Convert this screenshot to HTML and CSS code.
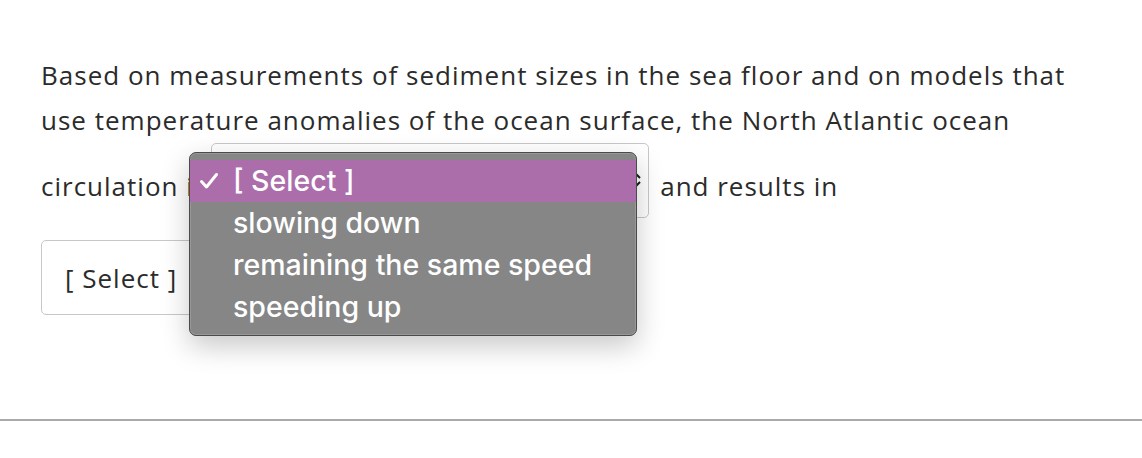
FILE: index.html
```html
<!DOCTYPE html>
<html lang="en">
<head>
<meta charset="utf-8">
<title>Question</title>
<link rel="stylesheet" href="styles.css">
</head>
<body>
<div class="page">
  <div class="question">
    <div class="line">Based on measurements of sediment sizes in the sea floor and on models that</div>
    <div class="line">use temperature anomalies of the ocean surface, the North Atlantic ocean</div>
    <div class="row">
      <span class="label">circulation is</span>
      <div class="select select-first">
        <span class="select-text">[ Select ]</span>
        <svg class="select-arrow" width="10" height="18" viewBox="0 0 10 18"><path d="M2 7 L5 4 L8 7 M2 11 L5 14 L8 11" fill="none" stroke="#1a1a1a" stroke-width="2"/></svg>
      </div>
      <span class="label label-after">and results in</span>
    </div>
    <div class="row row-second">
      <div class="select select-second">
        <span class="select-text">[ Select ]</span>
      </div>
    </div>
  </div>
  <div class="rule"></div>

  <div class="menu">
    <div class="option selected">
      <svg class="check" width="20" height="18" viewBox="0 0 20 18"><path d="M2.5 9.5 L7.5 15 L17.5 2.5" fill="none" stroke="#fff" stroke-width="3" stroke-linecap="round" stroke-linejoin="round"/></svg>
      <span>[ Select ]</span>
    </div>
    <div class="option">slowing down</div>
    <div class="option">remaining the same speed</div>
    <div class="option">speeding up</div>
  </div>
</div>
</body>
</html>
```
FILE: styles.css
```css
html, body {
  margin: 0;
  padding: 0;
  background: #fff;
}
.page {
  position: relative;
  width: 1142px;
  height: 458px;
  overflow: hidden;
  font-family: "Open Sans", "Liberation Sans", sans-serif;
  color: #2b2b2b;
}
.question {
  padding: 53px 0 0 41px;
  letter-spacing: 1px;
}
.line {
  font-size: 26px;
  line-height: 45px;
  height: 45px;
  white-space: nowrap;
}
.row {
  display: flex;
  align-items: flex-start;
  height: 75px;
}
.row-second {
  margin-top: 22px;
}
.label {
  font-size: 26px;
  line-height: 45px;
  margin-top: 21px;
  white-space: nowrap;
}
.label-after {
  margin-left: 11px;
}
.select {
  box-sizing: border-box;
  height: 75px;
  width: 438px;
  border: 1px solid #c8c8c8;
  border-radius: 5px;
  background: #fff;
  display: flex;
  align-items: center;
  padding-left: 23px;
  position: relative;
}
.select-first {
  margin-left: 4px;
}
.select-text {
  font-size: 26px;
  line-height: 32px;
}
.select-arrow {
  position: absolute;
  right: 6px;
  top: 27px;
}
.rule {
  margin-top: 104px;
  height: 2px;
  background: #aaaaaa;
}
.menu {
  position: absolute;
  left: 189px;
  top: 152px;
  width: 448px;
  height: 184px;
  box-sizing: border-box;
  padding: 7px 0;
  background: #868686;
  border: 1px solid #4a4a4a;
  border-radius: 7px;
  box-shadow: 0 0 0 1px rgba(255,255,255,0.15) inset, 0 10px 28px rgba(0,0,0,0.22);
  font-family: "Inter", "Noto Sans", sans-serif;
  font-weight: 500;
  font-size: 28.5px;
  color: #fff;
}
.option {
  height: 42px;
  line-height: 42px;
  padding-left: 43px;
  position: relative;
  white-space: nowrap;
}
.option.selected {
  background: #ab6eab;
}
.check {
  position: absolute;
  left: 9px;
  top: 12px;
}
```
